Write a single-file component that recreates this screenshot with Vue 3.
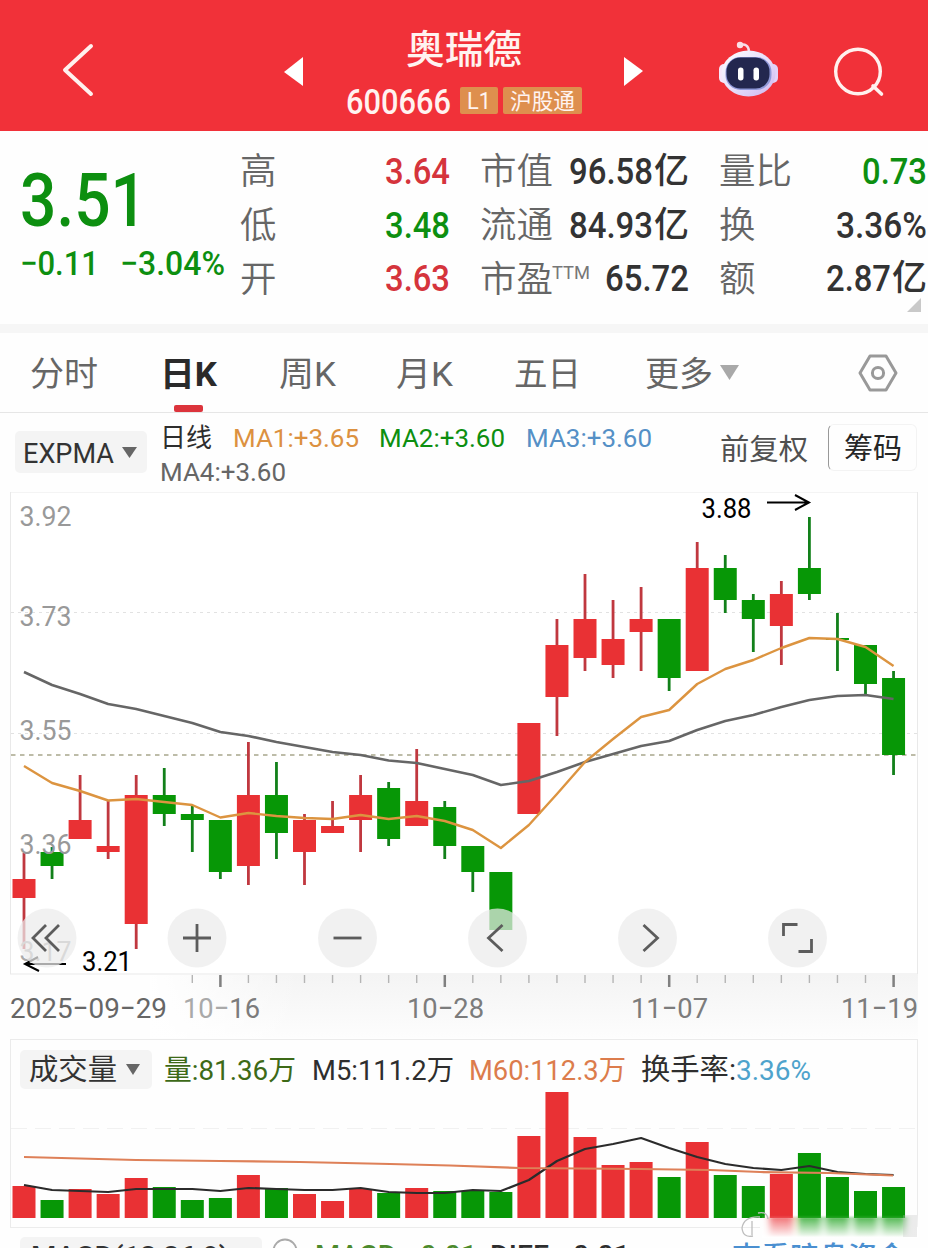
<template>
  <div class="page">
    <header class="header">
      <svg class="back" width="34" height="56" viewBox="0 0 34 56">
        <path d="M30 4 L4 28 L30 52" fill="none" stroke="#fff1ee" stroke-width="4" stroke-linecap="round" stroke-linejoin="round" />
      </svg>
      <svg class="prev" width="20" height="30" viewBox="0 0 20 30"><path d="M0 15 L19 0 V29 Z" fill="#fff" /></svg>
      <div class="title">
        <FitText class="name" text="奥瑞德" :w="116" :size="38.5" :weight="500" />
        <div class="code-row">
          <FitText text="600666" :w="105" :size="34.5" :weight="500" />
          <span class="badge badge-l1"><FitText text="L1" :w="24" :size="23" /></span>
          <span class="badge badge-sh"><FitText text="沪股通" :w="65" :size="22" /></span>
        </div>
      </div>
      <svg class="next" width="20" height="30" viewBox="0 0 20 30"><path d="M0 0 L19 14 L0 29 Z" fill="#fff" /></svg>
      <svg class="robot" width="60" height="58" viewBox="718 40 60 58">
        <defs>
          <linearGradient id="shell" x1="0" y1="0" x2="1" y2="1">
            <stop offset="0" stop-color="#fff" />
            <stop offset="0.55" stop-color="#e5dcfa" />
            <stop offset="1" stop-color="#cdb4ee" />
          </linearGradient>
        </defs>
        <path d="M740 45 Q748 43 749 51" fill="none" stroke="#f7dce9" stroke-width="2.5" />
        <circle cx="740" cy="45" r="3.2" fill="#fbdfe6" />
        <rect x="719" y="64" width="10" height="19" rx="5" fill="#f7e6fa" />
        <rect x="768" y="64" width="10" height="19" rx="5" fill="#e2d2f8" />
        <ellipse cx="748.5" cy="73.5" rx="27" ry="23" fill="url(#shell)" />
        <rect x="725.5" y="57" width="46" height="33" rx="15" fill="#8f98d8" />
        <rect x="726.5" y="57.5" width="43" height="31" rx="14" fill="#23274f" />
        <rect x="738" y="67.5" width="5.5" height="13" rx="2.7" fill="#fff" />
        <rect x="753.5" y="67.5" width="5.5" height="13" rx="2.7" fill="#fff" />
      </svg>
      <svg class="search" width="52" height="52" viewBox="833 45 52 52">
        <circle cx="858" cy="70.5" r="22.3" fill="none" stroke="#fff1ee" stroke-width="3.4" />
        <path d="M873 85 L881.5 93" stroke="#fff1ee" stroke-width="3.6" stroke-linecap="round" />
      </svg>
    </header>

    <section class="quote">
      <div class="price-col green">
        <FitText text="3.51" :w="127" :size="75" :weight="500" />
        <div class="change">
          <FitText text="−0.11" :w="79" :size="34" :weight="500" />
          <FitText text="−3.04%" :w="105" :size="34" :weight="500" />
        </div>
      </div>
      <div class="stats">
        <div v-for="s in stats" :key="s.label" class="stat">
          <FitText class="stat-label" :text="s.label" :w="s.label.length * 36.5" :size="36" :weight="350" />
          <span v-if="s.sup" class="stat-sup"><FitText :text="s.sup" :w="38" :size="19" /></span>
          <span class="stat-value" :class="s.color">
            <FitText :text="s.value" :w="s.w" :size="37" :weight="500" />
            <FitText v-if="s.unit" class="unit" :text="s.unit" :w="35" :size="35" :weight="500" />
          </span>
        </div>
      </div>
      <i class="corner"></i>
    </section>

    <nav class="tabs">
      <span v-for="t in tabs" :key="t.text" class="tab" :class="{ active: t.active }">
        <FitText :text="t.text" :w="t.w" :size="34" :weight="t.active ? 700 : 400" />
      </span>
      <svg class="more" width="19" height="15" viewBox="0 0 19 15"><path d="M0 0 H19 L9.5 15 Z" fill="#a9a9a9" /></svg>
      <svg class="setting" width="40" height="38" viewBox="0 0 40 38">
        <path d="M12 2 H28 L38 19 L28 36 H12 L2 19 Z" fill="none" stroke="#999" stroke-width="3" stroke-linejoin="round" />
        <circle cx="20" cy="19" r="5.6" fill="none" stroke="#999" stroke-width="3" />
      </svg>
    </nav>

    <section class="indicator">
      <div class="pill">
        <FitText text="EXPMA" :w="91" :size="27" />
        <svg width="15" height="11" viewBox="0 0 15 11"><path d="M0 0 H15 L7.5 11 Z" fill="#666" /></svg>
      </div>
      <div class="ma">
        <div class="ma-row">
          <FitText class="dark" text="日线" :w="52" :size="26" />
          <FitText class="orange" text="MA1:+3.65" :w="126" :size="26.5" />
          <FitText class="green" text="MA2:+3.60" :w="126" :size="26.5" />
          <FitText class="blue" text="MA3:+3.60" :w="126" :size="26.5" />
        </div>
        <FitText class="gray" text="MA4:+3.60" :w="126" :size="26.5" />
      </div>
      <FitText class="fq" text="前复权" :w="88" :size="29" />
      <div class="chip"><FitText text="筹码" :w="58" :size="29" /></div>
    </section>

    <svg class="kline" width="928" height="547" viewBox="0 492 928 547">
      <defs>
        <linearGradient id="axis" x1="0" y1="0" x2="0" y2="1">
          <stop offset="0" stop-color="#f4f4f4" />
          <stop offset="1" stop-color="#fdfdfd" />
        </linearGradient>
        <linearGradient id="fade" x1="0" y1="0" x2="1" y2="0">
          <stop offset="0" stop-color="#fff" />
          <stop offset="1" stop-color="#fff" stop-opacity="0" />
        </linearGradient>
      </defs>
      <rect x="150" y="975" width="768" height="63" fill="url(#axis)" />
      <rect x="150" y="975" width="150" height="63" fill="url(#fade)" />
      <rect x="10.5" y="492" width="907" height="482" fill="#fff" stroke="#e9e9e9" />
      <g stroke="#e2e2e2" stroke-dasharray="3 4">
        <path d="M11 612.5 H917" />
        <path d="M11 733.5 H917" />
      </g>
      <path d="M11 755 H917" stroke="#a8a68c" stroke-width="1.6" stroke-dasharray="4.5 4.5" />

      <g v-for="(c, i) in candles" :key="i" :fill="c[0] === 'r' ? red : green">
        <rect :x="cx(i) - 1.4" :y="c[1]" width="2.8" :height="c[4] - c[1]" :fill="c[0] === 'r' ? '#c0383f' : '#12801a'" />
        <rect :x="cx(i) - 11.5" :y="c[2]" width="23" :height="c[3] - c[2]" />
      </g>
      <polyline :points="line(emaSlow)" fill="none" stroke="#666" stroke-width="2.6" stroke-linejoin="round" />
      <polyline :points="line(emaFast)" fill="none" stroke="#dc9440" stroke-width="2.4" stroke-linejoin="round" />

      <text v-for="p in priceLabels" :key="p.text" class="num" x="19.5" :y="p.y" font-size="28" textLength="52" lengthAdjust="spacingAndGlyphs" :fill="p.fill">{{ p.text }}</text>

      <text class="num" x="701.5" y="517.5" font-size="27" textLength="50" lengthAdjust="spacingAndGlyphs" fill="#000">3.88</text>
      <path d="M767 502.5 H809 M795 495 L809 502.5 L795 510" fill="none" stroke="#000" stroke-width="2" />
      <text class="num" x="82" y="971" font-size="27" textLength="50" lengthAdjust="spacingAndGlyphs" fill="#000">3.21</text>
      <path d="M66 964 H25 M38 957 L25 964 L39 971" fill="none" stroke="#000" stroke-width="2" />

      <g v-for="b in buttons" :key="b.x">
        <circle :cx="b.x" cy="938" r="29.5" fill="#ececec" fill-opacity="0.72" />
        <path :d="b.d" :transform="`translate(${b.x} 938)`" fill="none" stroke="#5c5c5c" stroke-width="2.8" />
      </g>

      <rect v-for="t in ticks" :key="t.i" :x="cx(t.i) - (t.major ? 1.2 : 0.7)" y="975" :width="t.major ? 2.5 : 1.4" :height="t.major ? 12 : 8" :fill="t.major ? '#808080' : '#b5b5b5'" />
      <text v-for="d in dates" :key="d.text" class="num" :x="d.x" y="1018" font-size="28.5" :textLength="d.w" lengthAdjust="spacingAndGlyphs" :fill="d.fill"><tspan :fill="d.lead">{{ d.text.slice(0, 3) }}</tspan>{{ d.text.slice(3) }}</text>
    </svg>

    <section class="volume">
      <div class="vol-head">
        <div class="pill vol-pill">
          <FitText text="成交量" :w="88" :size="29" />
          <svg width="14" height="11" viewBox="0 0 14 11"><path d="M0 0 H14 L7 11 Z" fill="#666" /></svg>
        </div>
        <FitText class="olive" text="量:81.36万" :w="132" :size="28.5" />
        <FitText class="dark m5" text="M5:111.2万" :w="142" :size="28.5" />
        <FitText class="coral m60" text="M60:112.3万" :w="157" :size="28.5" />
        <FitText class="dark rate" text="换手率:" :w="95" :size="29" />
        <FitText class="sky" text="3.36%" :w="75" :size="28.5" />
      </div>
      <svg class="vol-chart" width="928" height="149" viewBox="0 1089 928 149">
        <defs>
          <linearGradient id="melt" x1="0" y1="0" x2="0" y2="1">
            <stop offset="0" stop-color="#fff" stop-opacity="0" />
            <stop offset="1" stop-color="#fff" />
          </linearGradient>
          <filter id="soft" x="-10%" y="-20%" width="120%" height="140%"><feGaussianBlur stdDeviation="3 1" /></filter>
        </defs>
        <path d="M11 1128.5 H917" stroke="#f1f1f1" stroke-dasharray="16 8" />
        <path d="M10 1227.5 H760" stroke="#ececec" />
        <rect v-for="(v, i) in volumes" :key="i" :x="cx(i) - 11.5" :y="v" width="23" :height="1218 - v" :fill="candles[i][0] === 'r' ? red : green" />
        <polyline :points="line(volMa5)" fill="none" stroke="#2b2b2b" stroke-width="2.2" stroke-linejoin="round" />
        <polyline :points="volMa60" fill="none" stroke="#de8058" stroke-width="2.2" stroke-linejoin="round" />
        <g filter="url(#soft)">
          <rect v-for="i in [27, 28, 29, 30, 31]" :key="i" :x="cx(i) - 12" y="1217" width="24" height="20" :fill="candles[i][0] === 'r' ? red : green" fill-opacity="0.75" />
        </g>
        <rect x="762" y="1215" width="156" height="23" fill="url(#melt)" />
        <g fill="none" stroke="#bdbdbd" stroke-width="1.3">
          <path d="M760 1217 Q744 1216 742 1228 Q743 1238 753 1236" />
          <path d="M752 1221 V1235 M758 1213 Q767 1211 768 1219" />
        </g>
        <rect x="903" y="1215" width="14" height="22" fill="#bbb" fill-opacity="0.28" />
      </svg>
    </section>

    <section class="macd">
      <div class="pill macd-pill"><FitText text="MACD(12,26,9)" :w="198" :size="27" :weight="500" /></div>
      <svg class="help" width="28" height="28" viewBox="0 0 28 28"><circle cx="14" cy="14" r="11.5" fill="none" stroke="#aaa" stroke-width="2" /></svg>
      <FitText class="olive-2" text="MACD:−0.01" :w="162" :size="27" :weight="500" />
      <FitText class="dark diff" text="DIFF:−0.01" :w="140" :size="27" :weight="500" />
      <FitText class="link" text="查看暗盘资金" :w="174" :size="29" :weight="500" />
    </section>
  </div>
</template>

<script setup>
import { h } from 'vue'

// one line of text squeezed or stretched to an exact width
const FitText = (props) =>
  h('svg', { class: 'fit', width: props.w, height: props.size }, [
    h('text', {
      x: 0,
      y: props.size * 0.87,
      fill: 'currentColor',
      'font-size': props.size,
      'font-weight': props.weight || 400,
      textLength: props.w,
      lengthAdjust: 'spacingAndGlyphs'
    }, props.text)
  ])
FitText.props = ['text', 'w', 'size', 'weight']

const red = '#e93134'
const green = '#079706'

const stats = [
  { label: '高', value: '3.64', w: 65, color: 'red' },
  { label: '市值', value: '96.58', w: 84, unit: '亿' },
  { label: '量比', value: '0.73', w: 65, color: 'green' },
  { label: '低', value: '3.48', w: 65, color: 'green' },
  { label: '流通', value: '84.93', w: 84, unit: '亿' },
  { label: '换', value: '3.36%', w: 91 },
  { label: '开', value: '3.63', w: 65, color: 'red' },
  { label: '市盈', sup: 'TTM', value: '65.72', w: 84 },
  { label: '额', value: '2.87', w: 65, unit: '亿' }
]

const tabs = [
  { text: '分时', w: 68 },
  { text: '日K', w: 57, active: true },
  { text: '周K', w: 57 },
  { text: '月K', w: 57 },
  { text: '五日', w: 67 },
  { text: '更多', w: 68 }
]

const priceLabels = [
  { text: '3.92', y: 526, fill: '#999' },
  { text: '3.73', y: 626, fill: '#999' },
  { text: '3.55', y: 740, fill: '#999' },
  { text: '3.36', y: 853.5, fill: '#999' },
  { text: '3.17', y: 960.5, fill: '#aaa' }
]

// colour, high, body top, body bottom, low
const candles = [
  ['r', 853, 879, 898, 949], ['g', 847, 852, 866, 879], ['r', 775, 820, 839, 839], ['r', 801, 846, 852, 859],
  ['r', 775, 795, 924, 949], ['g', 768, 795, 814, 826], ['g', 806, 814, 820, 852], ['g', 820, 820, 872, 879],
  ['r', 742, 795, 866, 885], ['g', 762, 795, 833, 859], ['r', 814, 820, 852, 885], ['r', 801, 826, 833, 833],
  ['r', 775, 795, 820, 852], ['g', 782, 788, 839, 846], ['r', 749, 801, 826, 826], ['g', 801, 807, 846, 859],
  ['g', 846, 846, 872, 892], ['g', 872, 872, 930, 930], ['r', 723, 723, 814, 814], ['r', 619, 645, 697, 736],
  ['r', 574, 619, 658, 671], ['r', 600, 639, 665, 678], ['r', 587, 619, 632, 671], ['g', 619, 619, 678, 691],
  ['r', 542, 568, 671, 671], ['g', 555, 568, 600, 613], ['g', 594, 600, 619, 652], ['r', 581, 594, 626, 665],
  ['g', 517, 568, 594, 600], ['g', 613, 638, 640, 671], ['g', 645, 645, 684, 695], ['g', 671, 678, 755, 775]
]

const emaFast = [766, 783, 791, 800.5, 799, 802, 805, 817.5, 813, 816, 818, 819, 815, 819, 816, 821, 830, 848, 825, 794, 762, 739, 717, 710, 684, 669, 660, 648, 638, 639, 647, 666]
const emaSlow = [672, 685, 694, 704, 709, 716, 723, 732, 736, 742, 747, 752, 755, 760.5, 763, 769, 775, 785, 781, 772, 762, 754, 746, 741, 730, 721, 715, 707, 700, 696, 695, 699]
const volumes = [1186, 1200, 1189, 1194, 1178, 1187, 1200, 1198, 1175, 1188, 1194, 1201, 1189, 1193, 1188, 1191, 1191, 1192, 1136, 1092, 1137, 1165, 1162, 1177, 1142, 1175, 1186, 1174, 1153, 1177, 1191, 1187]
const volMa5 = [1185, 1190, 1191, 1192, 1189, 1189, 1189, 1191, 1188, 1189, 1190, 1190, 1188, 1192, 1193, 1193, 1190, 1191, 1180, 1161, 1149, 1144, 1138, 1148, 1157, 1164, 1168, 1170, 1166, 1172, 1174, 1175]
const volMa60 = '24,1157 80,1158.5 136,1160 220,1161 300,1162 390,1164 450,1165.5 520,1168 640,1169 710,1170 760,1172 830,1173 893,1175.5'

const cx = (i) => 24 + i * 28.05
const line = (ys) => ys.map((y, i) => `${cx(i)},${y}`).join(' ')

const buttons = [
  { x: 47, d: 'M-1 -13 L-14 0 L-1 13 M12 -13 L-1 0 L12 13' },
  { x: 197, d: 'M-14 0 H14 M0 -14 V14' },
  { x: 347.5, d: 'M-14 0 H14' },
  { x: 497.5, d: 'M5 -13 L-9 0 L5 13' },
  { x: 647.5, d: 'M-4 -13 L10 0 L-4 13' },
  { x: 797.5, d: 'M-14 -2 V-13.5 H0 M1 13.5 H14 V1' }
]

const ticks = Array.from({ length: 26 }, (_, n) => ({ i: n + 6, major: (n + 6) % 8 === 7 }))

const dates = [
  { text: '2025−09−29', x: 10, w: 157, lead: '#666', fill: '#666' },
  { text: '10−16', x: 183, w: 77, lead: '#a9a9a9', fill: '#7c7c7c' },
  { text: '10−28', x: 407, w: 77, lead: '#7c7c7c', fill: '#7c7c7c' },
  { text: '11−07', x: 631, w: 77, lead: '#7c7c7c', fill: '#7c7c7c' },
  { text: '11−19', x: 841, w: 77, lead: '#7c7c7c', fill: '#7c7c7c' }
]
</script>

<style>
body {
  margin: 0;
  background: #fff;
}
</style>

<style scoped>
.page {
  width: 928px;
  height: 1248px;
  overflow: hidden;
  background: #fefefe;
  color: #333;
  font-family: Roboto, "Noto Sans CJK SC", sans-serif;
}

.fit {
  display: block;
  flex-shrink: 0;
  overflow: visible;
}

.red { color: #d5343c; }
.green { color: #0d8f10; }
.dark { color: #2e2e2e; }
.gray { color: #666; }
.orange { color: #dc9140; }
.blue { color: #5590c6; }
.olive { color: #3d6a17; }
.olive-2 { color: #4c8a2c; }
.coral { color: #dc7c4c; }
.sky { color: #4ea3cc; }

.header {
  height: 131px;
  background: #f13139;
  color: #fff3f0;
  display: flex;
  align-items: flex-start;
}

.back { margin: 42px 0 0 61px; }
.prev { margin: 57px 0 0 189px; }
.next { margin: 57px 0 0 19px; }
.robot { margin: 40px 0 0 74px; }
.search { margin: 46px 0 0 55px; }

.title {
  width: 301px;
  margin-top: 29px;
  display: flex;
  flex-direction: column;
  align-items: flex-start;
}

.name {
  margin-left: 102px;
}

.code-row {
  display: flex;
  align-items: center;
  margin: 16px 0 0 42px;
}

.badge {
  height: 27px;
  display: flex;
  align-items: center;
  justify-content: center;
  background: #de8f4e;
  border-radius: 2px;
}

.badge-l1 {
  width: 38px;
  margin-left: 9px;
}

.badge-sh {
  width: 79px;
  margin-left: 5px;
}

.quote {
  position: relative;
  display: flex;
  height: 193px;
  border-bottom: 9px solid #f6f6f6;
}

.price-col {
  width: 220px;
  padding: 30px 0 0 20px;
}

.change {
  display: flex;
  gap: 21px;
  margin-top: 9px;
}

.stats {
  display: grid;
  grid-template-columns: 210px 209px 208px;
  grid-auto-rows: 53.7px;
  column-gap: 30px;
  padding-top: 13.5px;
}

.stat {
  display: flex;
  align-items: center;
}

.stat-label {
  color: #666;
}

.stat-sup {
  color: #777;
  margin: -14px 0 0 -1px;
}

.stat-value {
  display: flex;
  align-items: center;
  margin: -2px 0 0 auto;
}

.unit {
  margin-left: 1px;
}

.corner {
  position: absolute;
  right: 7px;
  bottom: 12px;
  border-left: 14px solid transparent;
  border-bottom: 14px solid #c9c9c9;
}

.tabs {
  display: flex;
  align-items: center;
  height: 79px;
  padding-left: 30px;
  border-bottom: 1px solid #e6e6e6;
  color: #666;
}

.tab {
  height: 79px;
  display: flex;
  align-items: center;
  position: relative;
  margin-right: 60.5px;
}

.tab:nth-of-type(1) { margin-right: 62px; }
.tab:nth-of-type(2) { margin-right: 61.5px; }
.tab:nth-of-type(5) { margin-right: 64px; }
.tab:nth-of-type(6) { margin-right: 7px; }

.tab.active {
  color: #2a2a2a;
}

.tab.active::after {
  content: "";
  position: absolute;
  left: 14px;
  bottom: 0;
  width: 29px;
  height: 7px;
  border-radius: 2px;
  background: #dc343c;
}

.setting {
  margin-left: 119px;
}

.indicator {
  display: flex;
  align-items: flex-start;
  height: 79px;
}

.pill {
  display: flex;
  align-items: center;
  background: #f4f4f4;
  border-radius: 5px;
  color: #333;
}

.indicator .pill {
  width: 124px;
  height: 42px;
  padding-left: 8px;
  margin: 18px 13px 0 15px;
  gap: 8px;
}

.ma {
  width: 560px;
  padding-top: 11px;
}

.ma-row {
  display: flex;
  gap: 20.5px;
  margin-bottom: 7px;
}

.fq {
  color: #505050;
  margin-top: 22px;
}

.chip {
  width: 87px;
  height: 43px;
  margin: 11px 0 0 20px;
  padding-top: 2px;
  box-sizing: content-box;
  display: flex;
  align-items: center;
  justify-content: center;
  border: 1px solid #f3f3f3;
  border-left-color: #999;
  border-radius: 6px;
  color: #262626;
}

.kline {
  display: block;
}

.num {
  font-family: Roboto, sans-serif;
}

.volume {
  height: 188px;
  background: linear-gradient(#ebebeb, #ebebeb) 10px 0 / 908px 1px no-repeat,
    linear-gradient(#ebebeb, #ebebeb) 10px 0 / 1px 188px no-repeat,
    linear-gradient(#ebebeb, #ebebeb) 917px 0 / 1px 188px no-repeat;
}

.vol-head {
  display: flex;
  align-items: center;
  height: 40px;
  padding: 10px 0 0 20px;
}

.vol-pill {
  width: 123px;
  height: 39px;
  padding-left: 9px;
  margin-right: 12px;
  gap: 9px;
}

.m5 { margin-left: 16px; }
.m60 { margin-left: 15px; }
.rate { margin-left: 15px; }

.vol-chart {
  display: block;
}

.macd {
  height: 21px;
  display: flex;
  align-items: flex-start;
  padding: 10px 0 0 20px;
}

.macd-pill {
  width: 231px;
  height: 36px;
  padding-left: 11px;
}

.help { margin: 0 16px 0 9px; }

.olive-2 { margin-top: 4px; }

.diff { margin: 4px 0 0 13px; }

.link {
  color: #4a8fd0;
  margin: 6px 0 0 102px;
}
</style>
